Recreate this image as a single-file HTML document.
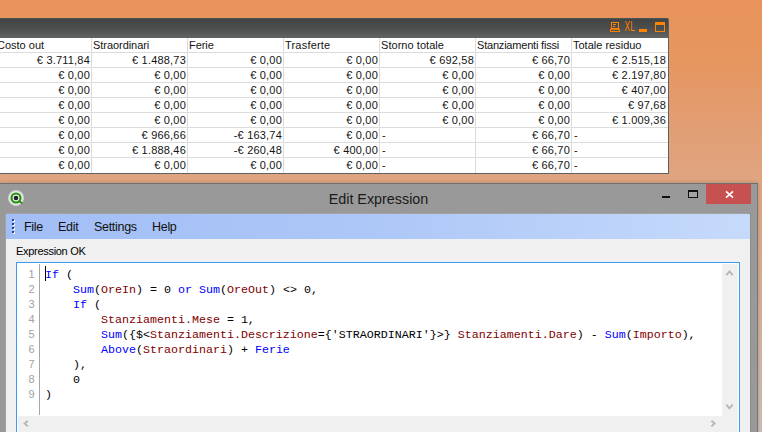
<!DOCTYPE html>
<html><head><meta charset="utf-8">
<style>
*{margin:0;padding:0;box-sizing:border-box}
html,body{width:762px;height:432px;overflow:hidden}
body{position:relative;font-family:"Liberation Sans",sans-serif;background:linear-gradient(180deg,#e8935a 0px,#e6965f 60px,#e29d72 120px,#dfa581 182px,#d6b09a 300px,#cdbfb5 432px)}
#tbar{position:absolute;left:0;top:18px;width:669px;height:20px;background:linear-gradient(180deg,#424444 0,#4c4e4e 45%,#626464 100%);border-top:1px solid #4c5458;border-right:1px solid #586266;border-top-right-radius:2px}
#tbl{position:absolute;left:0;top:38px;width:669px;height:136px;background:#fff;border-right:1px solid #5c6264;border-bottom:1px solid #5c6264;overflow:hidden}
.vl{position:absolute;top:0;width:1px;height:135px;background:#dcdcdc}
.hl{position:absolute;left:0;height:1px;width:668px;background:#dcdcdc}
.c{position:absolute;font-size:11px;line-height:15px;height:15px;color:#141414;white-space:nowrap;letter-spacing:0.2px}
.r{text-align:right}
#win{position:absolute;left:0;top:183px;width:758px;height:260px;background:#999;border-top:1px solid #6e7072;border-right:1px solid #777;box-shadow:0 0 4px rgba(0,0,0,.2)}
#client{position:absolute;left:6px;top:30px;width:744px;height:230px;background:#f0f0f0;box-shadow:-1px -1px 0 #a2a2a2,1px -1px 0 #8e8e8e}
#menu{position:absolute;left:0;top:0;width:744px;height:25px;background:linear-gradient(90deg,#a2bef6 0,#adc7f7 50%,#c6dafb 100%)}
.mi{position:absolute;top:6px;font-size:12.5px;line-height:14px;color:#111;letter-spacing:-0.3px}
#title{position:absolute;left:0;width:757px;top:6px;text-align:center;font-size:15.5px;line-height:18px;color:#1a1a1a;transform:scaleX(0.925);transform-origin:378.5px 0}
#close{position:absolute;left:706px;top:0;width:45px;height:20px;background:#c75050}
#ed{position:absolute;left:10px;top:48px;width:724px;height:190px;background:#fff;border:1px solid #3c9bf0}
.ln{position:absolute;left:-0.5px;width:18px;text-align:right;font-size:11px;line-height:15px;height:15px;color:#a2a2a2}
.cl{position:absolute;left:28px;font-family:"Liberation Mono",monospace;font-size:11.67px;line-height:15px;height:15px;color:#000;white-space:pre}
.b{color:#0000ff}.m{color:#800000}
svg{position:absolute;overflow:visible}
</style></head><body>
<div id="tbar">
<svg style="left:609px;top:2px" width="58" height="12" viewBox="0 0 58 12">
 <g fill="none" stroke="#ff8200" stroke-width="1">
  <rect x="2.500" y="1.500" width="7" height="6"/><path d="M4 3.500h3M4 5.500h2"/><rect x="1.500" y="8.300" width="9" height="2.200"/>
 </g>
 <text x="15.600" y="10.200" font-size="14" fill="#ff8200" textLength="10.200" lengthAdjust="spacingAndGlyphs" font-family="Liberation Sans">XL</text>
 <rect x="30" y="8" width="8" height="3" fill="#ff8200"/>
 <rect x="46.500" y="1.500" width="9" height="9" fill="none" stroke="#ff8200"/><rect x="46" y="1" width="10" height="3" fill="#ff8200"/>
</svg>
</div>
<div id="tbl">
<div class="vl" style="left:91px"></div>
<div class="vl" style="left:187px"></div>
<div class="vl" style="left:283px"></div>
<div class="vl" style="left:379px"></div>
<div class="vl" style="left:475px"></div>
<div class="vl" style="left:571px"></div>
<div class="hl" style="top:14px"></div>
<div class="hl" style="top:29px"></div>
<div class="hl" style="top:44px"></div>
<div class="hl" style="top:59px"></div>
<div class="hl" style="top:74px"></div>
<div class="hl" style="top:89px"></div>
<div class="hl" style="top:104px"></div>
<div class="hl" style="top:119px"></div>
<div class="c" style="left:-3px;top:0px;letter-spacing:0.00px">Costo out</div>
<div class="c" style="left:93px;top:0px;letter-spacing:-0.05px">Straordinari</div>
<div class="c" style="left:189px;top:0px;letter-spacing:-0.05px">Ferie</div>
<div class="c" style="left:285px;top:0px;letter-spacing:0.20px">Trasferte</div>
<div class="c" style="left:381px;top:0px;letter-spacing:0.05px">Storno totale</div>
<div class="c" style="left:477px;top:0px;letter-spacing:-0.20px">Stanziamenti fissi</div>
<div class="c" style="left:573px;top:0px;letter-spacing:0.00px">Totale residuo</div>
<div class="c r" style="right:578.0px;top:15px">€ 3.711,84</div>
<div class="c r" style="right:482.0px;top:15px">€ 1.488,73</div>
<div class="c r" style="right:386.0px;top:15px">€ 0,00</div>
<div class="c r" style="right:290.0px;top:15px">€ 0,00</div>
<div class="c r" style="right:194.0px;top:15px">€ 692,58</div>
<div class="c r" style="right:98.0px;top:15px">€ 66,70</div>
<div class="c r" style="right:2.0px;top:15px">€ 2.515,18</div>
<div class="c r" style="right:578.0px;top:30px">€ 0,00</div>
<div class="c r" style="right:482.0px;top:30px">€ 0,00</div>
<div class="c r" style="right:386.0px;top:30px">€ 0,00</div>
<div class="c r" style="right:290.0px;top:30px">€ 0,00</div>
<div class="c r" style="right:194.0px;top:30px">€ 0,00</div>
<div class="c r" style="right:98.0px;top:30px">€ 0,00</div>
<div class="c r" style="right:2.0px;top:30px">€ 2.197,80</div>
<div class="c r" style="right:578.0px;top:45px">€ 0,00</div>
<div class="c r" style="right:482.0px;top:45px">€ 0,00</div>
<div class="c r" style="right:386.0px;top:45px">€ 0,00</div>
<div class="c r" style="right:290.0px;top:45px">€ 0,00</div>
<div class="c r" style="right:194.0px;top:45px">€ 0,00</div>
<div class="c r" style="right:98.0px;top:45px">€ 0,00</div>
<div class="c r" style="right:2.0px;top:45px">€ 407,00</div>
<div class="c r" style="right:578.0px;top:60px">€ 0,00</div>
<div class="c r" style="right:482.0px;top:60px">€ 0,00</div>
<div class="c r" style="right:386.0px;top:60px">€ 0,00</div>
<div class="c r" style="right:290.0px;top:60px">€ 0,00</div>
<div class="c r" style="right:194.0px;top:60px">€ 0,00</div>
<div class="c r" style="right:98.0px;top:60px">€ 0,00</div>
<div class="c r" style="right:2.0px;top:60px">€ 97,68</div>
<div class="c r" style="right:578.0px;top:75px">€ 0,00</div>
<div class="c r" style="right:482.0px;top:75px">€ 0,00</div>
<div class="c r" style="right:386.0px;top:75px">€ 0,00</div>
<div class="c r" style="right:290.0px;top:75px">€ 0,00</div>
<div class="c r" style="right:194.0px;top:75px">€ 0,00</div>
<div class="c r" style="right:98.0px;top:75px">€ 0,00</div>
<div class="c r" style="right:2.0px;top:75px">€ 1.009,36</div>
<div class="c r" style="right:578.0px;top:90px">€ 0,00</div>
<div class="c r" style="right:482.0px;top:90px">€ 966,66</div>
<div class="c r" style="right:386.0px;top:90px">-€ 163,74</div>
<div class="c r" style="right:290.0px;top:90px">€ 0,00</div>
<div class="c" style="left:382px;top:90px">-</div>
<div class="c r" style="right:98.0px;top:90px">€ 66,70</div>
<div class="c" style="left:574px;top:90px">-</div>
<div class="c r" style="right:578.0px;top:105px">€ 0,00</div>
<div class="c r" style="right:482.0px;top:105px">€ 1.888,46</div>
<div class="c r" style="right:386.0px;top:105px">-€ 260,48</div>
<div class="c r" style="right:290.0px;top:105px">€ 400,00</div>
<div class="c" style="left:382px;top:105px">-</div>
<div class="c r" style="right:98.0px;top:105px">€ 66,70</div>
<div class="c" style="left:574px;top:105px">-</div>
<div class="c r" style="right:578.0px;top:120px">€ 0,00</div>
<div class="c r" style="right:482.0px;top:120px">€ 0,00</div>
<div class="c r" style="right:386.0px;top:120px">€ 0,00</div>
<div class="c r" style="right:290.0px;top:120px">€ 0,00</div>
<div class="c" style="left:382px;top:120px">-</div>
<div class="c r" style="right:98.0px;top:120px">€ 66,70</div>
<div class="c" style="left:574px;top:120px">-</div>
</div>
<div id="win">
 <svg style="left:7px;top:5px" width="19" height="19" viewBox="0 0 19 19">
  <defs><radialGradient id="hl" cx="50%" cy="50%" r="50%"><stop offset="0" stop-color="#fff" stop-opacity="1"/><stop offset="0.72" stop-color="#f4f0f4" stop-opacity=".95"/><stop offset="0.88" stop-color="#d8d4d8" stop-opacity=".75"/><stop offset="1" stop-color="#aaa" stop-opacity="0"/></radialGradient></defs>
  <circle cx="9" cy="9" r="8.700" fill="url(#hl)"/>
  <path d="M12 12l2.700 2" stroke="#1f9208" stroke-width="1.800" stroke-linecap="round"/>
  <circle cx="9" cy="9" r="4.500" fill="#f0f0f0" stroke="#1f9208" stroke-width="2.100"/>
  <circle cx="9" cy="9" r="2.300" fill="#222"/>
 </svg>
 <div id="title">Edit Expression</div>
 <div style="position:absolute;left:662px;top:12px;width:8px;height:2px;background:#111"></div>
 <div style="position:absolute;left:688px;top:6px;width:10px;height:8px;border:1px solid #111;border-top-width:2px;background:#a4a4a4"></div>
 <div id="close"><svg style="left:18.5px;top:6px" width="9" height="9" viewBox="0 0 9 9"><path d="M1 1.300l7 6.400M8 1.300l-7 6.400" stroke="#fff" stroke-width="1.700" fill="none"/></svg></div>
 <div id="client">
  <div id="menu">
   <svg style="left:5px;top:5px" width="4" height="16" viewBox="0 0 4 16">
    <g fill="#fff"><rect x="2" y="1" width="2" height="2"/><rect x="2" y="5" width="2" height="2"/><rect x="2" y="9" width="2" height="2"/><rect x="2" y="13" width="2" height="2"/></g>
    <g fill="#27418f"><rect x="1" y="0" width="2" height="2"/><rect x="1" y="4" width="2" height="2"/><rect x="1" y="8" width="2" height="2"/><rect x="1" y="12" width="2" height="2"/></g>
   </svg>
   <span class="mi" style="left:18px">File</span>
   <span class="mi" style="left:52px">Edit</span>
   <span class="mi" style="left:88px">Settings</span>
   <span class="mi" style="left:146px">Help</span>
  </div>
  <div style="position:absolute;left:10px;top:30px;font-size:11px;line-height:14px;color:#000;letter-spacing:-0.3px">Expression OK</div>
  <div id="ed">
   <div style="position:absolute;left:22px;top:1px;width:1px;height:151px;background:#a6a6a6"></div>
   <div style="position:absolute;left:28px;top:3px;width:1px;height:15px;background:#000"></div>

<div class="ln" style="top:4px">1</div><div class="cl" style="top:5px"><span class="b">If</span> (</div>
<div class="ln" style="top:19px">2</div><div class="cl" style="top:20px">    <span class="b">Sum</span>(<span class="m">OreIn</span>) = 0 <span class="b">or</span> <span class="b">Sum</span>(<span class="m">OreOut</span>) &lt;&gt; 0,</div>
<div class="ln" style="top:34px">3</div><div class="cl" style="top:35px">    <span class="b">If</span> (</div>
<div class="ln" style="top:49px">4</div><div class="cl" style="top:50px">        <span class="m">Stanziamenti.Mese</span> = 1,</div>
<div class="ln" style="top:64px">5</div><div class="cl" style="top:65px">        <span class="b">Sum</span>({$&lt;<span class="m">Stanziamenti.Descrizione</span>={'STRAORDINARI'}&gt;} <span class="m">Stanziamenti.Dare</span>) - <span class="b">Sum</span>(<span class="m">Importo</span>),</div>
<div class="ln" style="top:79px">6</div><div class="cl" style="top:80px">        <span class="b">Above</span>(<span class="m">Straordinari</span>) + <span class="b">Ferie</span></div>
<div class="ln" style="top:94px">7</div><div class="cl" style="top:95px">    ),</div>
<div class="ln" style="top:109px">8</div><div class="cl" style="top:110px">    0</div>
<div class="ln" style="top:124px">9</div><div class="cl" style="top:125px">)</div>
   <div style="position:absolute;left:1px;top:153px;width:720px;height:40px;background:#f0f0f0"></div>
   <div style="position:absolute;left:705px;top:1px;width:16px;height:170px;background:#f0f0f0"></div>
   <svg style="left:-17px;top:-263px" width="762" height="432" viewBox="0 0 762 432">
    <g fill="none" stroke="#b6b6b6" stroke-width="1.900">
     <path d="M726.300 275.200L729.500 271.400L732.700 275.200"/>
     <path d="M726.300 404.600L729.500 408.400L732.700 404.600"/>
     <path d="M27.900 420.800L24.700 423.600L27.900 426.400"/>
     <path d="M711.400 420.800L714.600 423.600L711.400 426.400"/>
    </g>
   </svg>
  </div>
 </div>
</div>
</body></html>
